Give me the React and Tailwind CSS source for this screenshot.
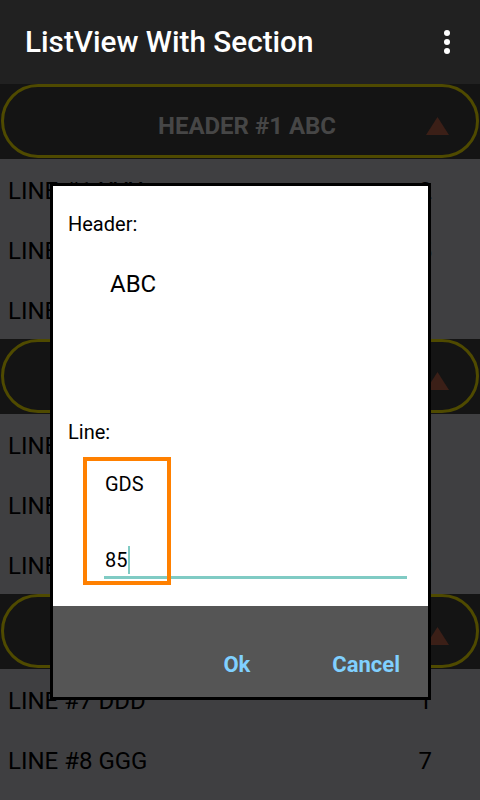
const sections = [
  {
    title: 'HEADER #1 ABC',
    lines: [
      { name: 'LINE #1 XYX', count: 2 },
      { name: 'LINE #2 ABC', count: 5 },
      { name: 'LINE #3 GDS', count: 3 },
    ],
  },
  {
    title: 'HEADER #2 DEF',
    lines: [
      { name: 'LINE #4 KLM', count: 1 },
      { name: 'LINE #5 GDS', count: 3 },
      { name: 'LINE #6 XYZ', count: 0 },
    ],
  },
  {
    title: 'HEADER #3 GHI',
    lines: [
      { name: 'LINE #7 DDD', count: 1 },
      { name: 'LINE #8 GGG', count: 7 },
    ],
  },
];

function SectionHeader({ title }) {
  return (
    <div className="h-[75px] bg-[#141414] px-[1px]">
      <div className="h-[74px] rounded-full border-[3px] border-[#4f4a00] flex items-center pt-[9px]">
        <div className="flex-1 text-center pl-[64px] text-[24px] leading-[28px] font-bold text-[#464646]">
          {title}
        </div>
        <svg width="23" height="18" viewBox="0 0 23 18" className="mr-[27px] shrink-0">
          <polygon points="11.5,0 23,18 0,18" fill="#3b1f17" />
        </svg>
      </div>
    </div>
  );
}

function LineRow({ name, count }) {
  return (
    <div className="h-[60px] flex items-center justify-between pl-[8px] pr-[48px] pt-[3px] text-[24px] leading-[28px] text-black">
      <span>{name}</span>
      <span>{count}</span>
    </div>
  );
}

function EditDialog() {
  return (
    <div className="absolute left-[50px] top-[183px] w-[381px] h-[517px] border-[3px] border-black flex flex-col">
      <div className="relative h-[420px] bg-white text-black">
        <div className="pt-[26px] pl-[15px] text-[20px] leading-[24px]">Header:</div>
        <div className="mt-[34px] pl-[57px] text-[24px] leading-[28px]">ABC</div>
        <div className="mt-[122px] pl-[15px] text-[20px] leading-[24px]">Line:</div>
        <div className="mt-[28px] pl-[52px] text-[20px] leading-[24px]">GDS</div>
        <div className="mt-[50px] pl-[52px] flex items-center text-[20px] leading-[24px]">
          <span>85</span>
          <span className="w-[2px] h-[28px] bg-[#80cbc4] ml-[1px]" />
        </div>
        <div className="ml-[51px] mt-[2px] w-[303px] h-[3px] bg-[#80cbc4]" />
        <div className="absolute left-[30px] top-[271px] w-[88px] h-[128px] border-[4px] border-[#ff8000]" />
      </div>
      <div className="flex-1 bg-[#555555] flex justify-end items-start pt-[46px] pr-[28px] gap-[82px] text-[22px] leading-[26px] font-bold text-[#80d0ff]">
        <span>Ok</span>
        <span>Cancel</span>
      </div>
    </div>
  );
}

export default function App() {
  return (
    <div
      className="relative w-[480px] h-[800px] overflow-hidden bg-[#3f3f41]"
      style={{ fontFamily: 'Roboto, "Liberation Sans", sans-serif' }}
    >
      <div className="h-[84px] bg-[#212121] flex items-center justify-between pl-[25px] pr-[30px]">
        <h1 className="text-[29.7px] leading-[36px] font-medium text-white">ListView With Section</h1>
        <div className="flex flex-col gap-[3px]">
          <span className="w-[6px] h-[6px] rounded-full bg-white" />
          <span className="w-[6px] h-[6px] rounded-full bg-white" />
          <span className="w-[6px] h-[6px] rounded-full bg-white" />
        </div>
      </div>

      {sections.map((s) => (
        <div key={s.title}>
          <SectionHeader title={s.title} />
          {s.lines.map((l) => (
            <LineRow key={l.name} name={l.name} count={l.count} />
          ))}
        </div>
      ))}

      <EditDialog />
    </div>
  );
}
